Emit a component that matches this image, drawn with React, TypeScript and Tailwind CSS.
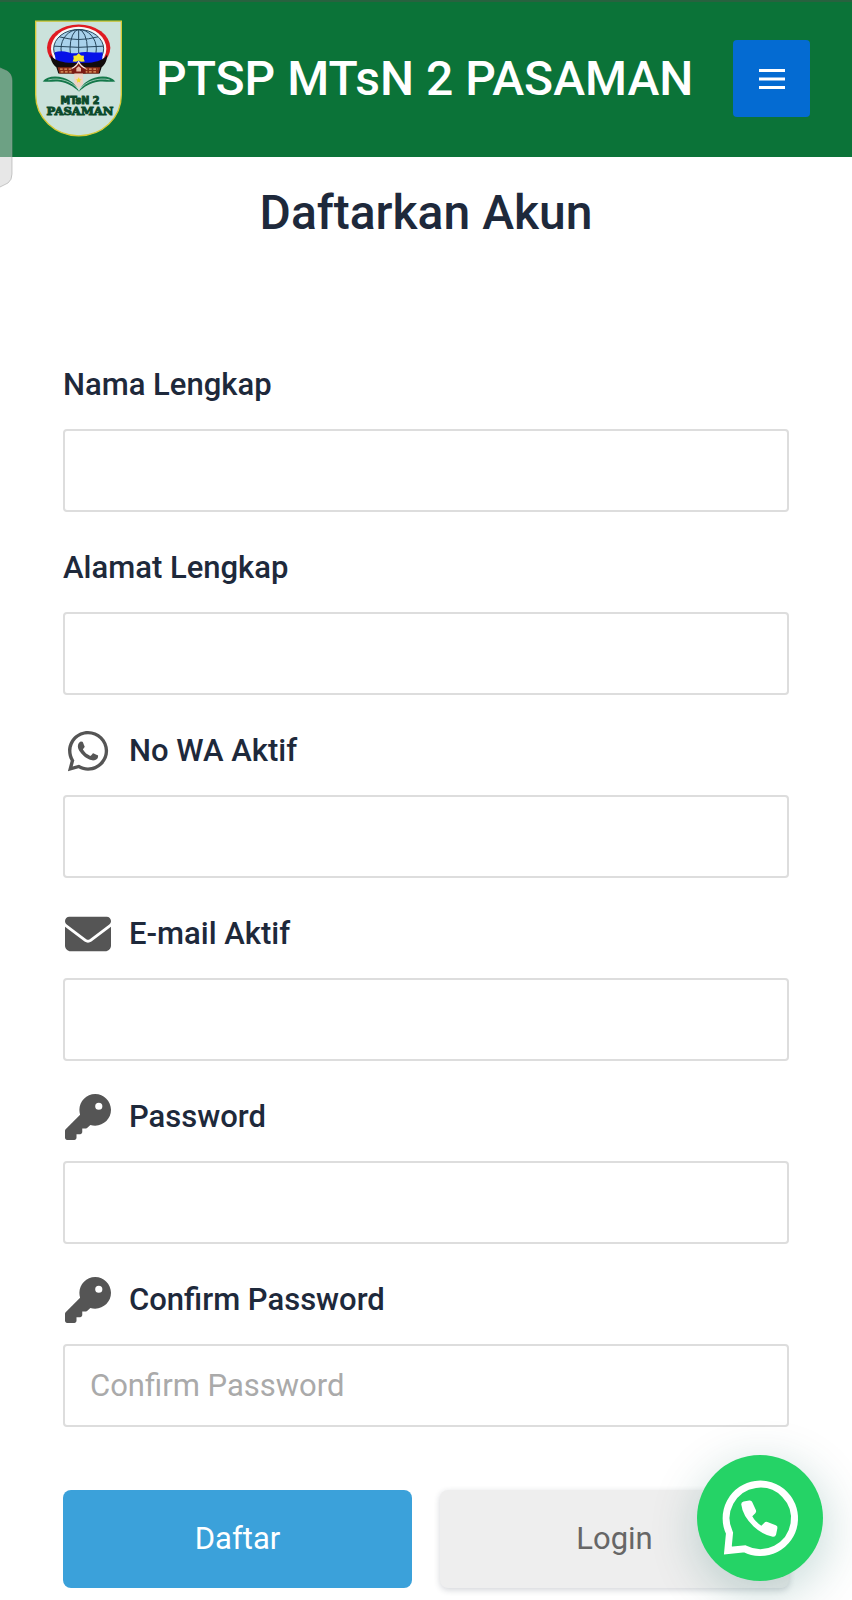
import type { ReactNode } from 'react';
import { FaEnvelope, FaKey, FaWhatsapp } from 'react-icons/fa6';

type Field = {
  id: string;
  label: string;
  type: string;
  icon?: ReactNode;
  placeholder?: string;
};

const fields: Field[] = [
  { id: 'nama', label: 'Nama Lengkap', type: 'text' },
  { id: 'alamat', label: 'Alamat Lengkap', type: 'text' },
  { id: 'whatsapp', label: 'No WA Aktif', type: 'tel', icon: <FaWhatsapp aria-hidden /> },
  { id: 'email', label: 'E-mail Aktif', type: 'email', icon: <FaEnvelope aria-hidden /> },
  { id: 'password', label: 'Password', type: 'password', icon: <FaKey aria-hidden /> },
  {
    id: 'confirm',
    label: 'Confirm Password',
    type: 'password',
    icon: <FaKey aria-hidden />,
    placeholder: 'Confirm Password',
  },
];

function SchoolLogo() {
  return (
    <svg viewBox="105 62 261 350" className="h-[117px] w-[87px] shrink-0" role="img" aria-label="MTsN 2 Pasaman">
      <path
        d="M107 65H364V286C364 356 307 409 236 409S107 356 107 286Z"
        fill="#cbe2db"
        stroke="#d8c937"
        strokeWidth="4"
      />
      {/* globe */}
      <ellipse cx="236" cy="145" rx="95" ry="70" fill="#e01b22" />
      <ellipse cx="236" cy="148" rx="83" ry="66" fill="#f6f8f8" />
      <ellipse cx="236" cy="148" rx="75" ry="58" fill="#a9d2ec" />
      <g fill="none" stroke="#26465c" strokeWidth="3">
        <ellipse cx="236" cy="148" rx="75" ry="58" />
        <ellipse cx="236" cy="148" rx="53" ry="58" />
        <ellipse cx="236" cy="148" rx="26" ry="58" />
        <path d="M236 90V180M178 112Q236 128 294 112M162 140Q236 147 310 140" />
      </g>
      <path d="M164 158Q184 152 204 158T236 160T270 158T308 158L306 192H168Z" fill="#0712e8" />
      {/* roof and house */}
      <path
        d="M151 165C160 181 180 187 205 190H267C292 187 312 181 322 165C321 184 315 196 305 203L299 222H175L169 203C159 196 152 184 151 165Z"
        fill="#120c0c"
      />
      <path d="M173 203H301L296 222H178Z" fill="#8b2d16" />
      <path d="M180 209H220M254 209H294M182 217H220M254 217H292" stroke="#e1a068" strokeWidth="4" strokeDasharray="8 5" />
      <path d="M215 207L236 187L257 207V222H215Z" fill="#7b1b13" />
      <path d="M215 207Q230 201 236 187Q242 201 257 207" fill="none" stroke="#f4ebdc" strokeWidth="4" />
      <path
        d="M236 161l7 7 9 1-1 9 3 8-11 1-7-4-7 4-11-1 3-8-1-9 9-1Z"
        fill="#f7e52a"
      />
      <path d="M229 206L236 200L243 206V216H229Z" fill="#e8b7a5" />
      <path d="M223 222H249V254L236 266L223 254Z" fill="#edd3c4" />
      <path d="M236 233l3 6 6 1-5 4 1 6-5-3-5 3 1-6-5-4 6-1Z" fill="#f4dc31" />
      {/* open book */}
      <path
        d="M128 246C140 231 165 227 190 235C213 242 230 257 237 277C222 261 201 251 180 247C163 244 147 249 128 246Z"
        fill="#14784a"
      />
      <path
        d="M346 246C334 231 308 227 284 235C261 242 244 257 237 277C252 261 273 251 294 247C311 244 326 249 346 246Z"
        fill="#14784a"
      />
      <path
        d="M145 241C180 233 216 246 233 268M329 241C294 233 258 246 241 268"
        fill="none"
        stroke="#d2e9df"
        strokeWidth="2"
      />
      <g textAnchor="middle" fill="#0b4a2b" stroke="#0b4a2b" strokeWidth="3" className="font-['DejaVu_Sans',sans-serif] font-bold">
        <text x="240" y="313" fontSize="29">MTsN 2</text>
        <text x="240" y="345" fontSize="35" className="font-['DejaVu_Serif',serif]">PASAMAN</text>
      </g>
    </svg>
  );
}

function Header() {
  return (
    <header className="flex items-center border-t-2 border-[#28623f] bg-[#0b7338] pr-[42px] pb-5 pl-[35px] pt-[18px]">
      <SchoolLogo />
      <a href="#" className="ml-[34px] flex-1 whitespace-nowrap text-5xl font-medium text-white">
        PTSP MTsN 2 PASAMAN
      </a>
      <button
        type="button"
        aria-label="Menu"
        className="flex size-[77px] shrink-0 items-center justify-center rounded-sm bg-[#046bd2] text-white"
      >
        <svg viewBox="0 0 26 20" className="h-5 w-[26px]" aria-hidden>
          <path d="M0 1.5H26M0 10H26M0 18.5H26" stroke="currentColor" strokeWidth="2.8" />
        </svg>
      </button>
    </header>
  );
}

function FormField({ id, label, type, icon, placeholder }: Field) {
  return (
    <div>
      <label htmlFor={id} className="flex h-[46px] items-center text-[31px] font-medium text-[#1e293b]">
        {icon && (
          <span className="mr-4 flex w-[50px] justify-center text-[46px] text-[#555]">{icon}</span>
        )}
        {label}
      </label>
      <input
        id={id}
        name={id}
        type={type}
        placeholder={placeholder}
        className="mt-[21px] block h-[83px] w-full rounded-sm border-2 border-[#ddd] bg-white px-[25px] text-[31px] text-[#666] outline-none placeholder:text-[#aaa] focus:border-[#999]"
      />
    </div>
  );
}

function WhatsAppButton() {
  return (
    <a
      href="#whatsapp"
      aria-label="WhatsApp"
      className="fixed right-[29px] bottom-[19px] size-[126px] rounded-full bg-[#25d366] text-white shadow-[2px_12px_50px_0_rgba(7,94,84,0.24)]"
    >
      <svg viewBox="52 46 376 376" className="size-full" aria-hidden>
        <path
          d="M149 279A102 102 0 1 1 195 326L144 331Z"
          fill="none"
          stroke="currentColor"
          strokeWidth="21"
        />
        <path
          d="M191 185L208 182Q215 181 217 187L228 211Q230 216 226 220L217 229Q226 246 244 257L253 248Q257 244 262 246L287 256Q293 258 292 264L288 283Q286 291 278 290Q247 283 221 259Q188 228 184 193Q184 187 191 185Z"
          fill="currentColor"
        />
      </svg>
    </a>
  );
}

export default function App() {
  return (
    <div className="relative min-h-screen bg-white font-[Roboto,sans-serif]">
      <Header />
      {/* edge panel handle */}
      <div className="absolute top-[67px] left-0 h-[122px] w-[13px]">
        <svg viewBox="0 0 13 122" className="size-full" aria-hidden>
          <path
            d="M-2 0L7 4Q12 7 12 14V107Q12 113 8 116L-2 121Z"
            fill="#d0d0d0"
            fillOpacity="0.5"
            stroke="#999"
            strokeOpacity="0.5"
          />
        </svg>
      </div>
      <main className="px-[63px] pt-[25px] pb-3">
        <h1 className="text-center text-5xl leading-[62px] font-medium text-[#1e293b]">Daftarkan Akun</h1>
        <form className="mt-[118px]" onSubmit={(e) => e.preventDefault()}>
          <div className="space-y-[33px]">
            {fields.map((field) => (
              <FormField key={field.id} {...field} />
            ))}
          </div>
          <div className="mt-[63px] grid grid-cols-2 gap-7 text-[31px]">
            <button type="submit" className="h-[98px] rounded-lg bg-[#3ba1da] text-white">
              Daftar
            </button>
            <a
              href="#login"
              className="flex h-[98px] items-center justify-center rounded-lg bg-[#eee] text-[#666] shadow-[0_2px_6px_rgba(30,41,59,0.2)]"
            >
              Login
            </a>
          </div>
        </form>
      </main>
      <WhatsAppButton />
    </div>
  );
}
